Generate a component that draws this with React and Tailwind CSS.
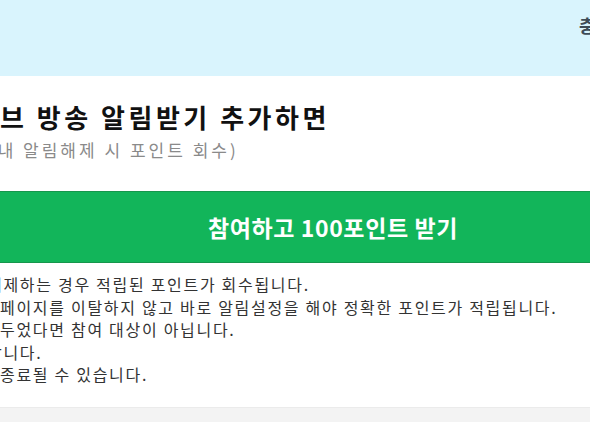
import React from 'react';

const notes = [
  { text: '해제하는 경우 적립된 포인트가 회수됩니다.', shift: '-ml-[13px]' },
  { text: '페이지를 이탈하지 않고 바로 알림설정을 해야 정확한 포인트가 적립됩니다.', shift: 'ml-0' },
  { text: '두었다면 참여 대상이 아닙니다.', shift: 'ml-0' },
  { text: '합니다.', shift: '-ml-[13px]' },
  { text: '종료될 수 있습니다.', shift: 'ml-0' },
];

export default function App() {
  return (
    <div
      className="w-[590px] h-[443px] overflow-hidden bg-white"
      style={{ fontFamily: '"Noto Sans CJK KR", "Noto Sans", sans-serif' }}
    >
      {/* top banner */}
      <div className="h-[76px] bg-[#d9f4fd] flex justify-end overflow-hidden">
        <div className="pt-[12px] -mr-[22px] text-[18px] font-bold text-[#3d4b57] whitespace-nowrap">충전</div>
      </div>

      {/* heading */}
      <div className="pt-[24px] overflow-hidden whitespace-nowrap">
        <h2 className="text-[26px] leading-[34px] font-bold text-[#111] tracking-[3.5px]">브 방송 알림받기 추가하면</h2>
        <p className="-ml-[21px] mt-[4px] text-[17px] leading-[24px] text-[#8a8a8a] tracking-[3px]">이내 알림해제 시 포인트 회수)</p>
      </div>

      {/* cta */}
      <div className="mt-[29px] -mx-[10px]">
        <button className="w-full h-[72px] bg-[#12b55a] border-y border-[#16964c] flex items-center justify-center pl-[76px] text-white text-[23px] font-bold tracking-[0.6px]">
          참여하고 100포인트 받기
        </button>
      </div>

      {/* notes */}
      <ul className="pt-[10px] overflow-hidden whitespace-nowrap text-[16px] leading-[22.5px] text-[#333] tracking-[1.7px]">
        {notes.map((n) => (
          <li key={n.text} className={n.shift}>{n.text}</li>
        ))}
      </ul>

      <div className="mt-[21px] h-[15px] bg-[#f3f3f3] border-t border-[#ebebeb]" />
    </div>
  );
}
